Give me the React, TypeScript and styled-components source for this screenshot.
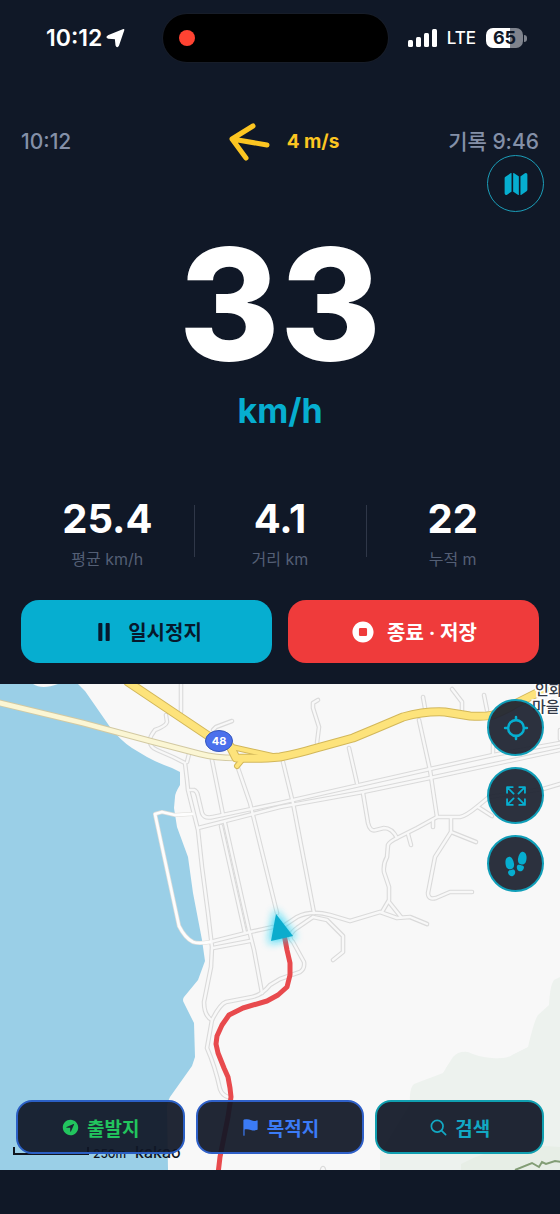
import React from 'react';
import styled, { createGlobalStyle } from 'styled-components';
import {
  IoMap,
  IoPause,
  IoStopCircle,
  IoLocateOutline,
  IoExpandOutline,
  IoFootsteps,
  IoNavigateCircle,
  IoFlag,
  IoSearchOutline,
} from 'react-icons/io5';

const color = {
  bg: '#101827',
  cyan: '#06aed0',
  red: '#ef3b3b',
  muted: '#8490a8',
  faint: '#545f75',
  amber: '#fcc521',
  green: '#22c55e',
  blue: '#3b7bf6',
};

const GlobalStyle = createGlobalStyle`
  *, *::before, *::after { box-sizing: border-box; }
  body {
    margin: 0;
    background: ${color.bg};
    color: #fff;
    font-family: Inter, "Noto Sans CJK KR", sans-serif;
  }
  button { font: inherit; cursor: pointer; }
`;

const Screen = styled.div`
  display: flex;
  flex-direction: column;
  min-height: 100vh;
  background: ${color.bg};
`;

const StatusBar = styled.header`
  display: grid;
  grid-template-columns: 1fr 225px 1fr;
  align-items: center;
  padding: 14px 9px 0 0;
`;

const StatusTime = styled.div`
  display: flex;
  align-items: center;
  gap: 4px;
  padding-left: 46px;
  font-size: 23px;
  line-height: 28px;
  font-weight: 600;
`;

const Island = styled.div`
  display: flex;
  align-items: center;
  height: 48px;
  padding-left: 16px;
  border-radius: 24px;
  background: #000;
  box-shadow: 0 0 0 1px #171d29;
`;

const RecordDot = styled.span`
  width: 16px;
  height: 16px;
  border-radius: 50%;
  background: #ff4332;
`;

const StatusRight = styled.div`
  display: flex;
  align-items: center;
  justify-content: flex-end;
  gap: 10px;
  padding-right: 24px;
  font-size: 17px;
  line-height: 24px;
  font-weight: 500;
`;

const Battery = styled.div`
  display: flex;
  align-items: center;
  gap: 1px;
  &::after {
    content: '';
    width: 3px;
    height: 7px;
    border-radius: 0 3px 3px 0;
    background: #7f838d;
  }
`;

const BatteryLevel = styled.span`
  width: 37px;
  height: 20px;
  border-radius: 7px;
  background: linear-gradient(90deg, #fff 65%, #7f838d 65%);
  color: ${color.bg};
  font-size: 18px;
  line-height: 20px;
  font-weight: 700;
  text-align: center;
`;

const Dashboard = styled.section`
  position: relative;
  display: flex;
  flex-direction: column;
  padding: 60px 21px 21px;
`;

const InfoRow = styled.div`
  display: grid;
  grid-template-columns: 1fr auto 1fr;
  align-items: center;
  height: 40px;
  font-size: 21px;
  line-height: 28px;
  font-weight: 500;
  color: ${color.muted};
  & > :last-child { text-align: right; }
`;

const Wind = styled.div`
  display: flex;
  align-items: center;
  gap: 16px;
  padding-left: 8px;
  font-size: 19px;
  font-weight: 700;
  color: ${color.amber};
`;

const RoundButton = styled.button<{ $solid?: boolean; $stroke?: number }>`
  display: flex;
  align-items: center;
  justify-content: center;
  width: 57px;
  height: 57px;
  padding: 0;
  border: ${(p) => (p.$solid ? 2 : 1)}px solid ${(p) => (p.$solid ? '#109fb9' : '#1b9db8')};
  border-radius: 50%;
  background: ${(p) => (p.$solid ? 'rgba(31, 36, 50, 0.94)' : 'transparent')};
  color: ${color.cyan};
  font-size: 26px;
  svg * { stroke-width: ${(p) => p.$stroke ?? 0}px; }
`;

const MapToggle = styled(RoundButton)`
  position: absolute;
  top: 93px;
  right: 16px;
`;

const Speed = styled.div`
  margin-top: 57px;
  display: flex;
  flex-direction: column;
  align-items: center;
`;

const SpeedValue = styled.div`
  font-size: 154px;
  line-height: 170px;
  font-weight: 800;
`;

const SpeedUnit = styled.div`
  font-size: 34px;
  line-height: 44px;
  font-weight: 700;
  color: ${color.cyan};
`;

const Stats = styled.dl`
  display: grid;
  grid-template-columns: repeat(3, 1fr);
  margin: 62px 0 0;
`;

const Stat = styled.div`
  position: relative;
  display: flex;
  flex-direction: column-reverse;
  align-items: center;
  & + &::before {
    content: '';
    position: absolute;
    left: 0;
    top: 10px;
    width: 1px;
    height: 52px;
    background: #2f3748;
  }
`;

const StatValue = styled.dd`
  margin: 0;
  font-size: 40px;
  line-height: 48px;
  font-weight: 700;
`;

const StatLabel = styled.dt`
  margin-top: 4px;
  font-size: 16px;
  line-height: 24px;
  color: ${color.faint};
`;

const Actions = styled.div`
  display: grid;
  grid-template-columns: 1fr 1fr;
  gap: 16px;
  margin-top: 29px;
`;

const ActionButton = styled.button<{ $bg: string; $fg: string }>`
  display: flex;
  align-items: center;
  justify-content: center;
  gap: 11px;
  height: 63px;
  border: 0;
  border-radius: 18px;
  background: ${(p) => p.$bg};
  color: ${(p) => p.$fg};
  font-size: 20px;
  font-weight: 700;
  svg { font-size: 26px; }
`;

const MapPanel = styled.main`
  position: relative;
  flex: 1;
  min-height: 440px;
  margin-bottom: 44px;
  overflow: hidden;
  background: #f8f8f8;
`;

const MapCanvas = styled.svg`
  position: absolute;
  inset: 0;
  width: 100%;
  height: 100%;
`;

const MapTools = styled.div`
  position: absolute;
  top: 15px;
  right: 16px;
  display: flex;
  flex-direction: column;
  gap: 11px;
`;

const PlaceBar = styled.div`
  position: absolute;
  left: 16px;
  right: 16px;
  bottom: 16px;
  display: grid;
  grid-template-columns: repeat(3, 1fr);
  gap: 11px;
`;

const PlaceButton = styled.button<{ $fg: string; $line: string; $stroke?: number }>`
  display: flex;
  align-items: center;
  justify-content: center;
  gap: 7px;
  height: 54px;
  border: 2px solid ${(p) => p.$line};
  border-radius: 16px;
  background: rgba(16, 23, 38, 0.93);
  color: ${(p) => p.$fg};
  font-size: 19px;
  font-weight: 700;
  svg { font-size: 19px; }
  svg * { stroke-width: ${(p) => p.$stroke ?? 0}px; }
`;

const minorRoads = [
  'M181 -4V28',
  'M166 31L167 38Q166 42 155 46Q149 54 150 57Q150 63 157 66L173 73L185 79L187 96L188 106L198 146L202 183L208 229L212 263L211 283L204 318Q204 332 212 336',
  'M189 70L187 78',
  'M213 46L216 43L232 37',
  'M212 76L223 131',
  'M221 142L245 249',
  'M225 139L249 246L254 266L262 309',
  'M238 84L250 119L277 229',
  'M190 106H194Q197 107 198 112L202 129Q204 135 213 133L280 119L430 85L493 71L560 59',
  'M198 144L280 123L363 108L430 94L560 66',
  'M210 258L250 248L273 243',
  'M213 264L250 257',
  'M283 78L293 119L314 229',
  'M349 64L357 99',
  'M363 109L368 139Q370 148 376 146L384 144Q392 144 397 154',
  'M419 36L430 86L437 133',
  'M433 136V143',
  'M382 228L389 216L389 203L384 188Q383 180 387 173L388 161Q389 158 397 154L417 144L437 133H460Q466 132 478 122L489 113L543 105L560 100',
  'M478 123L492 132',
  'M389 218L401 233',
  'M427 240L410 233L397 234L380 228L350 237L330 231Q311 226 297 233L285 241',
  'M451 134V148L435 173L428 209Q428 216 436 214L450 208H472',
  'M451 148L476 158',
  'M408 150L411 161',
  'M313 233L327 236L343 252V268L333 276',
  'M318 16L313 19V24L319 43L317 59',
  'M423 13L425 24',
  'M452 5L462 18V26',
  'M484 11L487 26',
  'M493 60V71',
  'M313 233L297 244Q286 252 293 258L304 278Q305 285 300 288L280 295L270 301Q262 311 252 313L226 318Q220 320 212 336L207 364Q215 382 220 405Q222 411 228 413',
  'M560 46V55',
  'M322 486Q323 482 324 486',
];

const seaRoad = 'M192 130L175 131L162 128L155 130L167 186L179 242Q185 254 193 258Q198 260 210 258';
const bridge = 'M-4 18L83 39L150 57L200 70Q215 74 236 74';
const highways = [
  'M128 -2L207 51L222 61',
  'M232 63L277 73',
  'M237 82L242 76',
  'M230 62L236 74Q262 75 280 73Q300 69 313 65L353 54L377 44L403 33Q425 27 445 28L470 32Q485 33 493 31Q508 25 515 20L537 9L564 -4',
];
const coast =
  'M0 0H33Q42 6 58 0H78L85 7L110 43Q121 57 132 64L147 73Q158 79 172 84L180 88L180 101Q175 109 175 113L174 124L177 143L188 173L193 209L202 256L205 277L198 296L184 313Q182 316 184 319L194 339L195 373L192 382L170 413Q167 418 167 423L168 486V1200H0Z';
const forest =
  'M410 420Q409 404 414 400L443 389Q447 382 453 373Q458 367 468 368Q478 373 492 374Q508 375 512 371L528 363Q534 337 538 331L549 321Q550 301 554 296L560 293V1200H380V469Z';
const track =
  'M284 250L287 266L290 279V291L287 303L278 311L267 317L243 324L229 331L222 341L217 352L216 360L218 369L224 384L228 393L230 404L231 413L228 433L220 473L218 490';

function RideMap() {
  return (
    <MapCanvas viewBox="0 0 560 486" preserveAspectRatio="xMidYMin slice" role="img" aria-label="주행 지도">
      <defs>
        <filter id="glow" x="-80%" y="-80%" width="260%" height="260%">
          <feGaussianBlur stdDeviation="4" />
        </filter>
      </defs>
      <path d={coast} fill="#9acfe7" />
      <path d={forest} fill="#edf2ee" />
      <path d="M461 486V480Q500 458 560 463V486Z" fill="#e7eee6" />
      <path d="M515 486L532 479L539 483L542 478L546 480L555 477L562 478" fill="none" stroke="#829d75" strokeWidth="2" />
      <g fill="none" strokeLinecap="round" strokeLinejoin="round">
        {minorRoads.map((d) => <path key={d} d={d} stroke="#dadada" strokeWidth="4.6" />)}
        <path d={seaRoad} stroke="#dddcd8" strokeWidth="4.2" />
        {minorRoads.map((d) => <path key={d} d={d} stroke="#f8f8f8" strokeWidth="2.4" />)}
        <path d={seaRoad} stroke="#fdfdfd" strokeWidth="2.8" />
        <path d={bridge} stroke="#d2c9a2" strokeWidth="6.6" />
        <path d={bridge} stroke="#fbf6d4" strokeWidth="4.8" />
        {highways.map((d, i) => <path key={d} d={d} stroke="#d2b75a" strokeWidth={i === 1 || i === 2 ? 6 : 9} />)}
        {highways.map((d, i) => <path key={d} d={d} stroke="#fde37b" strokeWidth={i === 1 || i === 2 ? 4 : 7} />)}
        <path d={track} stroke="#e84a4d" strokeWidth="5" />
      </g>
      <ellipse cx="219" cy="57" rx="13.5" ry="10.5" fill="#4b70ec" stroke="#3557bd" />
      <text x="219" y="61" textAnchor="middle" fontSize="11" fontWeight="700" fill="#fff">48</text>
      <g fontSize="15" fontWeight="500" fill="#333a48" stroke="#fff" strokeWidth="3" paintOrder="stroke">
        <text x="535" y="11">인화</text>
        <text x="532" y="28">마을</text>
      </g>
      <path d="M276 230L293 252L271 257Z" fill="#12d1f5" stroke="#12d1f5" strokeWidth="4" filter="url(#glow)" opacity="0.8" />
      <path d="M276 230L293 252L271 257Z" fill="#0baccd" />
      <path d="M14 463V470H88V463" fill="none" stroke="#10151e" strokeWidth="2" />
      <text x="93" y="474" fontSize="12" fontWeight="500" fill="#10151e">250m</text>
      <text x="135" y="474" fontSize="16" fontWeight="500" fill="#10151e">kakao</text>
    </MapCanvas>
  );
}

export default function App() {
  return (
    <Screen>
      <GlobalStyle />
      <StatusBar>
        <StatusTime>
          <span>10:12</span>
          <svg width="20" height="20" viewBox="0 0 20 20" aria-hidden="true">
            <path d="M17.6 1.8L12.2 17.4Q11.2 19.4 10.3 17.3L9.6 10.4L2.4 9.9Q0.2 9.2 2.2 8.1Z" fill="#fff" stroke="#fff" strokeWidth="1.6" strokeLinejoin="round" />
          </svg>
        </StatusTime>
        <Island><RecordDot /></Island>
        <StatusRight>
          <svg width="29" height="20" viewBox="0 0 29 20" fill="#fff" aria-hidden="true">
            <rect x="0" y="12" width="5" height="7" rx="1.5" />
            <rect x="8" y="9" width="5" height="10" rx="1.5" />
            <rect x="16" y="5" width="5" height="14" rx="1.5" />
            <rect x="24" y="1" width="5" height="18" rx="1.5" />
          </svg>
          <span>LTE</span>
          <Battery><BatteryLevel>65</BatteryLevel></Battery>
        </StatusRight>
      </StatusBar>

      <Dashboard>
        <InfoRow>
          <span>10:12</span>
          <Wind>
            <svg width="42" height="40" viewBox="0 0 42 40" fill="none" stroke="currentColor" strokeWidth="5" strokeLinecap="round" strokeLinejoin="round" aria-hidden="true">
              <path d="M38 23L3 17M24 4L3 17L17 36" />
            </svg>
            <span>4 m/s</span>
          </Wind>
          <span>기록 9:46</span>
        </InfoRow>
        <MapToggle type="button" aria-label="지도"><IoMap /></MapToggle>

        <Speed>
          <SpeedValue>33</SpeedValue>
          <SpeedUnit>km/h</SpeedUnit>
        </Speed>

        <Stats>
          <Stat><StatLabel>평균 km/h</StatLabel><StatValue>25.4</StatValue></Stat>
          <Stat><StatLabel>거리 km</StatLabel><StatValue>4.1</StatValue></Stat>
          <Stat><StatLabel>누적 m</StatLabel><StatValue>22</StatValue></Stat>
        </Stats>

        <Actions>
          <ActionButton type="button" $bg={color.cyan} $fg="#07182c">
            <IoPause />일시정지
          </ActionButton>
          <ActionButton type="button" $bg={color.red} $fg="#fff">
            <IoStopCircle />종료 · 저장
          </ActionButton>
        </Actions>
      </Dashboard>

      <MapPanel>
        <RideMap />
        <MapTools>
          <RoundButton $solid $stroke={46} type="button" aria-label="현재 위치"><IoLocateOutline size={28} /></RoundButton>
          <RoundButton $solid $stroke={36} type="button" aria-label="전체 화면"><IoExpandOutline /></RoundButton>
          <RoundButton $solid type="button" aria-label="발자취"><IoFootsteps /></RoundButton>
        </MapTools>
        <PlaceBar>
          <PlaceButton type="button" $fg={color.green} $line="#2b5fc4"><IoNavigateCircle />출발지</PlaceButton>
          <PlaceButton type="button" $fg={color.blue} $line="#2f60c8"><IoFlag />목적지</PlaceButton>
          <PlaceButton type="button" $fg="#12a9c4" $line="#109fb0" $stroke={46}><IoSearchOutline />검색</PlaceButton>
        </PlaceBar>
      </MapPanel>
    </Screen>
  );
}
